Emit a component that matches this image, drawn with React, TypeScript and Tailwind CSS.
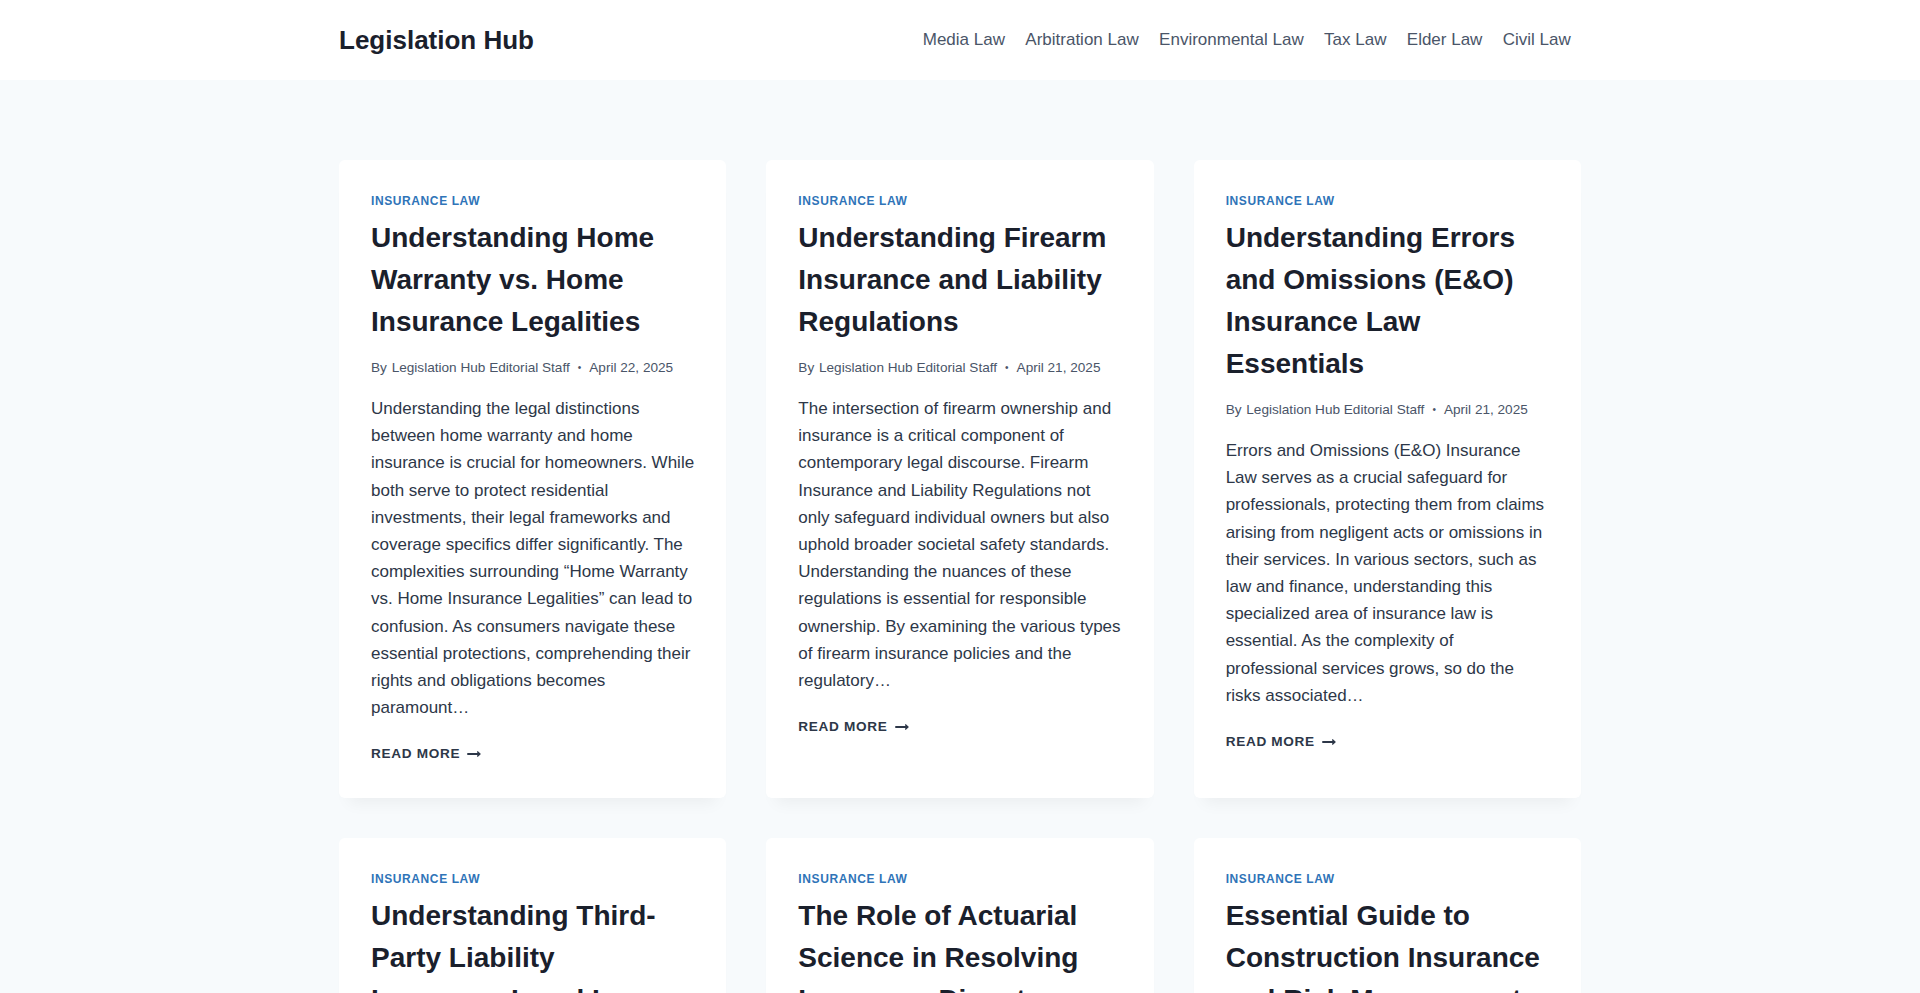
import React from "react";

type Post = {
  title: string;
  author: string;
  date: string;
  excerpt: string;
};

const navItems = ["Media Law", "Arbitration Law", "Environmental Law", "Tax Law", "Elder Law", "Civil Law"];

const posts: Post[] = [
  {
    title: "Understanding Home Warranty vs. Home Insurance Legalities",
    author: "Legislation Hub Editorial Staff",
    date: "April 22, 2025",
    excerpt:
      "Understanding the legal distinctions between home warranty and home insurance is crucial for homeowners. While both serve to protect residential investments, their legal frameworks and coverage specifics differ significantly. The complexities surrounding \u201cHome Warranty vs. Home Insurance Legalities\u201d can lead to confusion. As consumers navigate these essential protections, comprehending their rights and obligations becomes paramount\u2026",
  },
  {
    title: "Understanding Firearm Insurance and Liability Regulations",
    author: "Legislation Hub Editorial Staff",
    date: "April 21, 2025",
    excerpt:
      "The intersection of firearm ownership and insurance is a critical component of contemporary legal discourse. Firearm Insurance and Liability Regulations not only safeguard individual owners but also uphold broader societal safety standards. Understanding the nuances of these regulations is essential for responsible ownership. By examining the various types of firearm insurance policies and the regulatory\u2026",
  },
  {
    title: "Understanding Errors and Omissions (E&O) Insurance Law Essentials",
    author: "Legislation Hub Editorial Staff",
    date: "April 21, 2025",
    excerpt:
      "Errors and Omissions (E&O) Insurance Law serves as a crucial safeguard for professionals, protecting them from claims arising from negligent acts or omissions in their services. In various sectors, such as law and finance, understanding this specialized area of insurance law is essential. As the complexity of professional services grows, so do the risks associated\u2026",
  },
  {
    title: "Understanding Third-Party Liability Insurance Legal Issues",
    author: "Legislation Hub Editorial Staff",
    date: "April 20, 2025",
    excerpt:
      "Third-party liability insurance plays a vital role in protecting individuals and businesses from claims brought by others. Understanding the legal issues surrounding these policies helps policyholders manage risk and respond to disputes with confidence\u2026",
  },
  {
    title: "The Role of Actuarial Science in Resolving Insurance Disputes",
    author: "Legislation Hub Editorial Staff",
    date: "April 20, 2025",
    excerpt:
      "Actuarial science provides the quantitative foundation upon which insurance contracts are priced and evaluated. When disputes arise, actuarial analysis can offer objective insight into loss estimates, reserves and the fairness of claim settlements\u2026",
  },
  {
    title: "Essential Guide to Construction Insurance and Risk Management",
    author: "Legislation Hub Editorial Staff",
    date: "April 19, 2025",
    excerpt:
      "Construction projects carry a wide range of risks, from property damage to worker injuries. A sound approach to construction insurance and risk management protects contractors, owners and investors throughout the life of a project\u2026",
  },
];

// long arrow used after "Read More"
const ArrowRight = () => (
  <svg width="14" height="14" viewBox="0 0 27 28" fill="currentColor" aria-hidden="true">
    <path d="M27 13.953c0 0.141-0.063 0.281-0.156 0.375l-6 5.531c-0.156 0.141-0.359 0.172-0.547 0.094-0.172-0.078-0.297-0.25-0.297-0.453v-3.5h-19.5c-0.281 0-0.5-0.219-0.5-0.5v-3c0-0.281 0.219-0.5 0.5-0.5h19.5v-3.5c0-0.203 0.109-0.375 0.297-0.453s0.391-0.047 0.547 0.078l6 5.469c0.094 0.094 0.156 0.219 0.156 0.359v0z" />
  </svg>
);

const PostCard = ({ post }: { post: Post }) => (
  <article className="bg-white rounded-[6px] shadow-[0px_15px_15px_-10px_rgba(0,0,0,0.05)] px-8 pt-8 pb-8 flex flex-col">
    <a href="#" className="text-[12px] leading-[18px] font-bold uppercase tracking-[0.05em] text-[#2f74b8] self-start">
      Insurance Law
    </a>
    <h2 className="mt-[7px] text-[28px] leading-[42px] font-bold text-[#1A202C]">{post.title}</h2>
    <div className="mt-[14px] flex items-center text-[13.6px] leading-[22px] text-[#4A5568]">
      <span>
        By <span className="ml-[1px]">{post.author}</span>
      </span>
      <span className="mx-[8px] text-[10px]">•</span>
      <span>{post.date}</span>
    </div>
    <p className="mt-[16px] text-[17px] leading-[27.2px] text-[#2D3748]">{post.excerpt}</p>
    <a
      href="#"
      className="mt-[21px] self-start flex items-center gap-[7px] text-[13.6px] leading-[24px] font-bold uppercase tracking-[0.05em] text-[#2D3748]"
    >
      Read More <ArrowRight />
    </a>
  </article>
);

export default function App() {
  return (
    <div className="min-h-screen bg-[#F7FAFC] font-['Liberation_Sans',Arial,sans-serif]">
      <header className="bg-white">
        <div className="max-w-[1290px] mx-auto px-6 h-20 flex items-center justify-between">
          <a href="#" className="text-[26px] font-bold text-[#1A202C] leading-none">
            Legislation Hub
          </a>
          <nav className="flex items-center">
            {navItems.map((item) => (
              <a key={item} href="#" className="px-[10.2px] text-[17px] text-[#4A5568] leading-[24px]">
                {item}
              </a>
            ))}
          </nav>
        </div>
      </header>
      <main className="max-w-[1290px] mx-auto px-6 pt-20 pb-20">
        <div className="grid grid-cols-3 gap-10">
          {posts.map((post) => (
            <PostCard key={post.title} post={post} />
          ))}
        </div>
      </main>
    </div>
  );
}
